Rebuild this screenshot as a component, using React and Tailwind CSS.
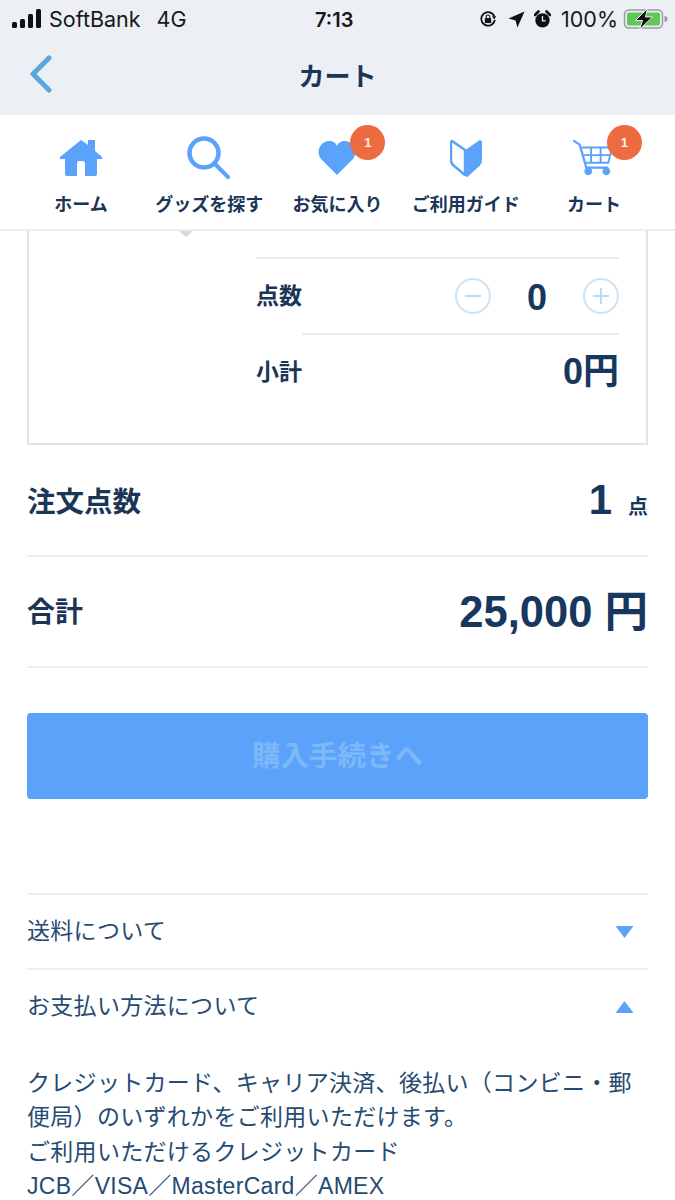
import React from "react";

const cjk = "font-['Liberation_Sans','Noto_Sans_CJK_JP',sans-serif]";

function StatusBar() {
    return (
        <div className="relative flex h-[38px] items-center justify-between pl-[12px] pr-[7px] font-['Inter','Noto_Sans_CJK_JP',sans-serif] text-[21.5px] text-[#16181c]">
            <div className="flex items-center">
                <svg width="30" height="20" viewBox="0 0 30 20" fill="#111">
                    <rect x="0" y="13" width="5" height="6" rx="1.5" />
                    <rect x="8" y="10" width="5" height="9" rx="1.5" />
                    <rect x="16" y="5" width="5" height="14" rx="1.5" />
                    <rect x="24" y="0" width="5" height="19" rx="1.5" />
                </svg>
                <span className="ml-[7px]">SoftBank</span>
                <span className="ml-[16px]">4G</span>
            </div>
            <span className="absolute left-[315px] top-[5px] text-[20px] font-semibold">7:13</span>
            <div className="flex items-center">
                <svg width="18" height="18" viewBox="0 0 20 20" fill="none" stroke="#111" strokeWidth="2">
                    <path d="M17 7 A7.5 7.5 0 1 0 17.5 11" />
                    <path d="M14.5 7 L19 7 L17 10.5 Z" fill="#111" stroke="none" />
                    <rect x="6.5" y="9" width="7" height="5.5" fill="#111" stroke="none" />
                    <path d="M8 9 V7.5 a2 2 0 0 1 4 0 V9" strokeWidth="1.2" />
                </svg>
                <svg className="ml-[11px]" width="17" height="17" viewBox="0 0 18 18" fill="#111">
                    <path d="M17.5 0.5 L10 17.5 L8 10 L0.5 8 Z" />
                </svg>
                <svg className="ml-[9px]" width="17" height="19" viewBox="0 0 19 20" fill="#111">
                    <circle cx="9.5" cy="11" r="8" />
                    <path d="M1 5 L5 1 M14 1 L18 5" stroke="#111" strokeWidth="3" strokeLinecap="round" />
                    <path d="M9.5 6 V11.5 H13" stroke="#eceff3" strokeWidth="1.4" fill="none" />
                </svg>
                <span className="ml-[10px]">100%</span>
                <svg className="ml-[5px]" width="45" height="22" viewBox="0 0 44 22">
                    <rect x="1" y="2" width="38" height="18" rx="4.5" fill="none" stroke="#9a9c9f" strokeWidth="1.5" />
                    <rect x="3.5" y="4.5" width="33" height="13" rx="2" fill="#5fc65a" />
                    <path d="M41 8 a3 3 0 0 1 0 6 Z" fill="#9a9c9f" />
                    <path d="M24 0.5 L12 12.5 H19 L16 21.5 L29 9 H22 Z" fill="#111" stroke="#eceff3" strokeWidth="1" />
                </svg>
            </div>
        </div>
    );
}

function Badge() {
    return (
        <span className="absolute left-[77px] top-[-8px] flex h-[35px] w-[35px] items-center justify-center rounded-full bg-[#ec6b40] text-[13px] font-bold text-[#fff2e8]">
            1
        </span>
    );
}

function NavItem({ label, badge, children }) {
    return (
        <div className="relative flex flex-col items-center">
            <div className="flex h-[50px] items-center justify-center">{children}</div>
            <span className="mt-[9px] whitespace-nowrap text-[18px] font-bold leading-[26px] text-[#1b3556]">{label}</span>
            {badge && <Badge />}
        </div>
    );
}

function NavBar() {
    return (
        <div className="grid h-[116px] grid-cols-5 border-b-2 border-[#eceef1] bg-white px-[17px] pt-[18px]">
            <NavItem label="ホーム">
                <svg width="44" height="38" viewBox="0 0 44 38" fill="#5aa2fa">
                    <path d="M22 1 L29 6 V1 H36 V12 L43 18 Q44 21 41 20 H38 V35 Q38 37 36 37 H26 V25 Q26 22 24 22 H20 Q18 22 18 25 V37 H8 Q6 37 6 35 V20 H3 Q0 21 1 18 Z" />
                </svg>
            </NavItem>
            <NavItem label="グッズを探す">
                <svg width="44" height="44" viewBox="0 0 44 44" fill="none" stroke="#5aa2fa" strokeWidth="4.5" strokeLinecap="round">
                    <circle cx="17" cy="17" r="14.5" />
                    <path d="M28 28 L41 41" strokeWidth="4" />
                </svg>
            </NavItem>
            <NavItem label="お気に入り" badge>
                <svg width="38" height="36" viewBox="0 0 38 36" fill="#5aa2fa">
                    <path d="M19 35 L3 19 C-3 11 3 1 11 1 C15 1 18 3 19 6 C20 3 23 1 27 1 C35 1 41 11 35 19 Z" />
                </svg>
            </NavItem>
            <NavItem label="ご利用ガイド">
                <svg width="32" height="40" viewBox="0 0 32 40">
                    <path d="M2 3 L15 12 V37 L3 27 Q1 25 1 22 V4 Z" fill="#fff" stroke="#5aa2fa" strokeWidth="2.5" strokeLinejoin="round" />
                    <path d="M30 3 L17 12 V38 L29 27 Q31 25 31 22 V4 Z" fill="#5aa2fa" stroke="#5aa2fa" strokeWidth="2" strokeLinejoin="round" />
                </svg>
            </NavItem>
            <NavItem label="カート" badge>
                <svg className="mr-[2px]" width="40" height="38" viewBox="0 0 42 38" fill="none" stroke="#5aa2fa" strokeWidth="2">
                    <path d="M1 1 L7 5 L14 29 H36" strokeWidth="2.4" strokeLinecap="round" />
                    <path d="M9 8 H41 L37 24 H13 M19 8 V24 M29 8 V24 M11 16 H39" />
                    <circle cx="16" cy="33" r="4" fill="#5aa2fa" stroke="none" />
                    <circle cx="35" cy="33" r="4" fill="#5aa2fa" stroke="none" />
                </svg>
            </NavItem>
        </div>
    );
}

function CircleButton({ plus }) {
    return (
        <span className="flex h-[36px] w-[36px] items-center justify-center rounded-full border-2 border-[#cfe3f4]">
            <svg width="20" height="20" viewBox="0 0 20 20" stroke="#bcd9f5" strokeWidth="2">
                <path d="M2 10 H18" />
                {plus && <path d="M10 2 V18" />}
            </svg>
        </span>
    );
}

function ProductCard() {
    return (
        <div className="relative mx-[27px] h-[214px] border-x-2 border-b-2 border-[#dde5ec] pl-[227px] pr-[27px] pt-[26px] text-[#1b3556]">
            <span className="absolute left-[150px] top-0 h-0 w-0 border-x-[7px] border-t-[6px] border-x-transparent border-t-[#d8d8d8]" />
            <div className="flex h-[76px] items-center justify-between border-t-2 border-[#e9edf2]">
                <span className="text-[23px] font-bold">点数</span>
                <div className="flex items-center">
                    <CircleButton />
                    <span className="w-[92px] pt-[3px] text-center text-[36px] font-bold leading-none text-[#17375e]">0</span>
                    <CircleButton plus />
                </div>
            </div>
            <div className="ml-[46px] border-t-2 border-[#e9edf2]" />
            <div className="flex h-[74px] items-center justify-between">
                <span className="text-[23px] font-bold">小計</span>
                <span className="text-[36px] font-bold leading-none text-[#17375e]">0円</span>
            </div>
        </div>
    );
}

function AccordionRow({ label, open }) {
    return (
        <div className="flex h-[75px] items-center justify-between border-t-2 border-[#eceef0] pr-[13px] text-[23px] text-[#264b73]">
            <span className="tracking-[0.3px]">{label}</span>
            <svg width="21" height="14" viewBox="0 0 20 14" fill="#5aa2fa">
                <path d={open ? "M10 1 L19 13 H1 Z" : "M1 1 H19 L10 13 Z"} strokeLinejoin="round" />
            </svg>
        </div>
    );
}

export default function App() {
    return (
        <div className={`h-[1200px] w-[675px] overflow-hidden bg-white ${cjk}`}>
            <div className="h-[115px] bg-[#eceff3]">
                <StatusBar />
                <div className="relative flex h-[77px] items-center justify-center">
                    <svg className="absolute left-[29px] top-[17px]" width="24" height="38" viewBox="0 0 24 38" fill="none" stroke="#5aa6df" strokeWidth="5" strokeLinecap="round" strokeLinejoin="round">
                        <path d="M20 3 L4 19 L20 35" />
                    </svg>
                    <span className="pt-[2px] text-[26px] font-bold text-[#1b3556]">カート</span>
                </div>
            </div>
            <NavBar />
            <ProductCard />

            <div className="mx-[27px] text-[#1b3556]">
                <div className="flex h-[112px] items-center justify-between border-b-2 border-[#eceef0]">
                    <span className="pt-[4px] text-[28.5px] font-bold">注文点数</span>
                    <span className="flex items-baseline font-bold text-[#17375e]">
                        <span className="text-[42px] leading-none">1</span>
                        <span className="ml-[16px] text-[20px]">点</span>
                    </span>
                </div>
                <div className="flex h-[111px] items-center justify-between border-b-2 border-[#eceef0]">
                    <span className="pt-[3px] text-[28px] font-bold">合計</span>
                    <span className="pt-[2px] text-[43.5px] font-bold leading-none text-[#17375e]">25,000 円</span>
                </div>
                <button className="mt-[45px] flex h-[86px] w-full items-center justify-center rounded-[4px] bg-[#5aa2fa] text-[28.5px] font-bold text-[#7db8f8]">
                    購入手続きへ
                </button>
                <div className="mt-[94px]">
                    <AccordionRow label="送料について" />
                    <AccordionRow label="お支払い方法について" open />
                </div>
                <p className="mt-[23px] text-[23px] leading-[34.4px] tracking-[0.3px] text-[#264b73]">
                    クレジットカード、キャリア決済、後払い（コンビニ・郵便局）のいずれかをご利用いただけます。
                    <br />
                    ご利用いただけるクレジットカード
                    <br />
                    JCB／VISA／MasterCard／AMEX
                </p>
            </div>
        </div>
    );
}
